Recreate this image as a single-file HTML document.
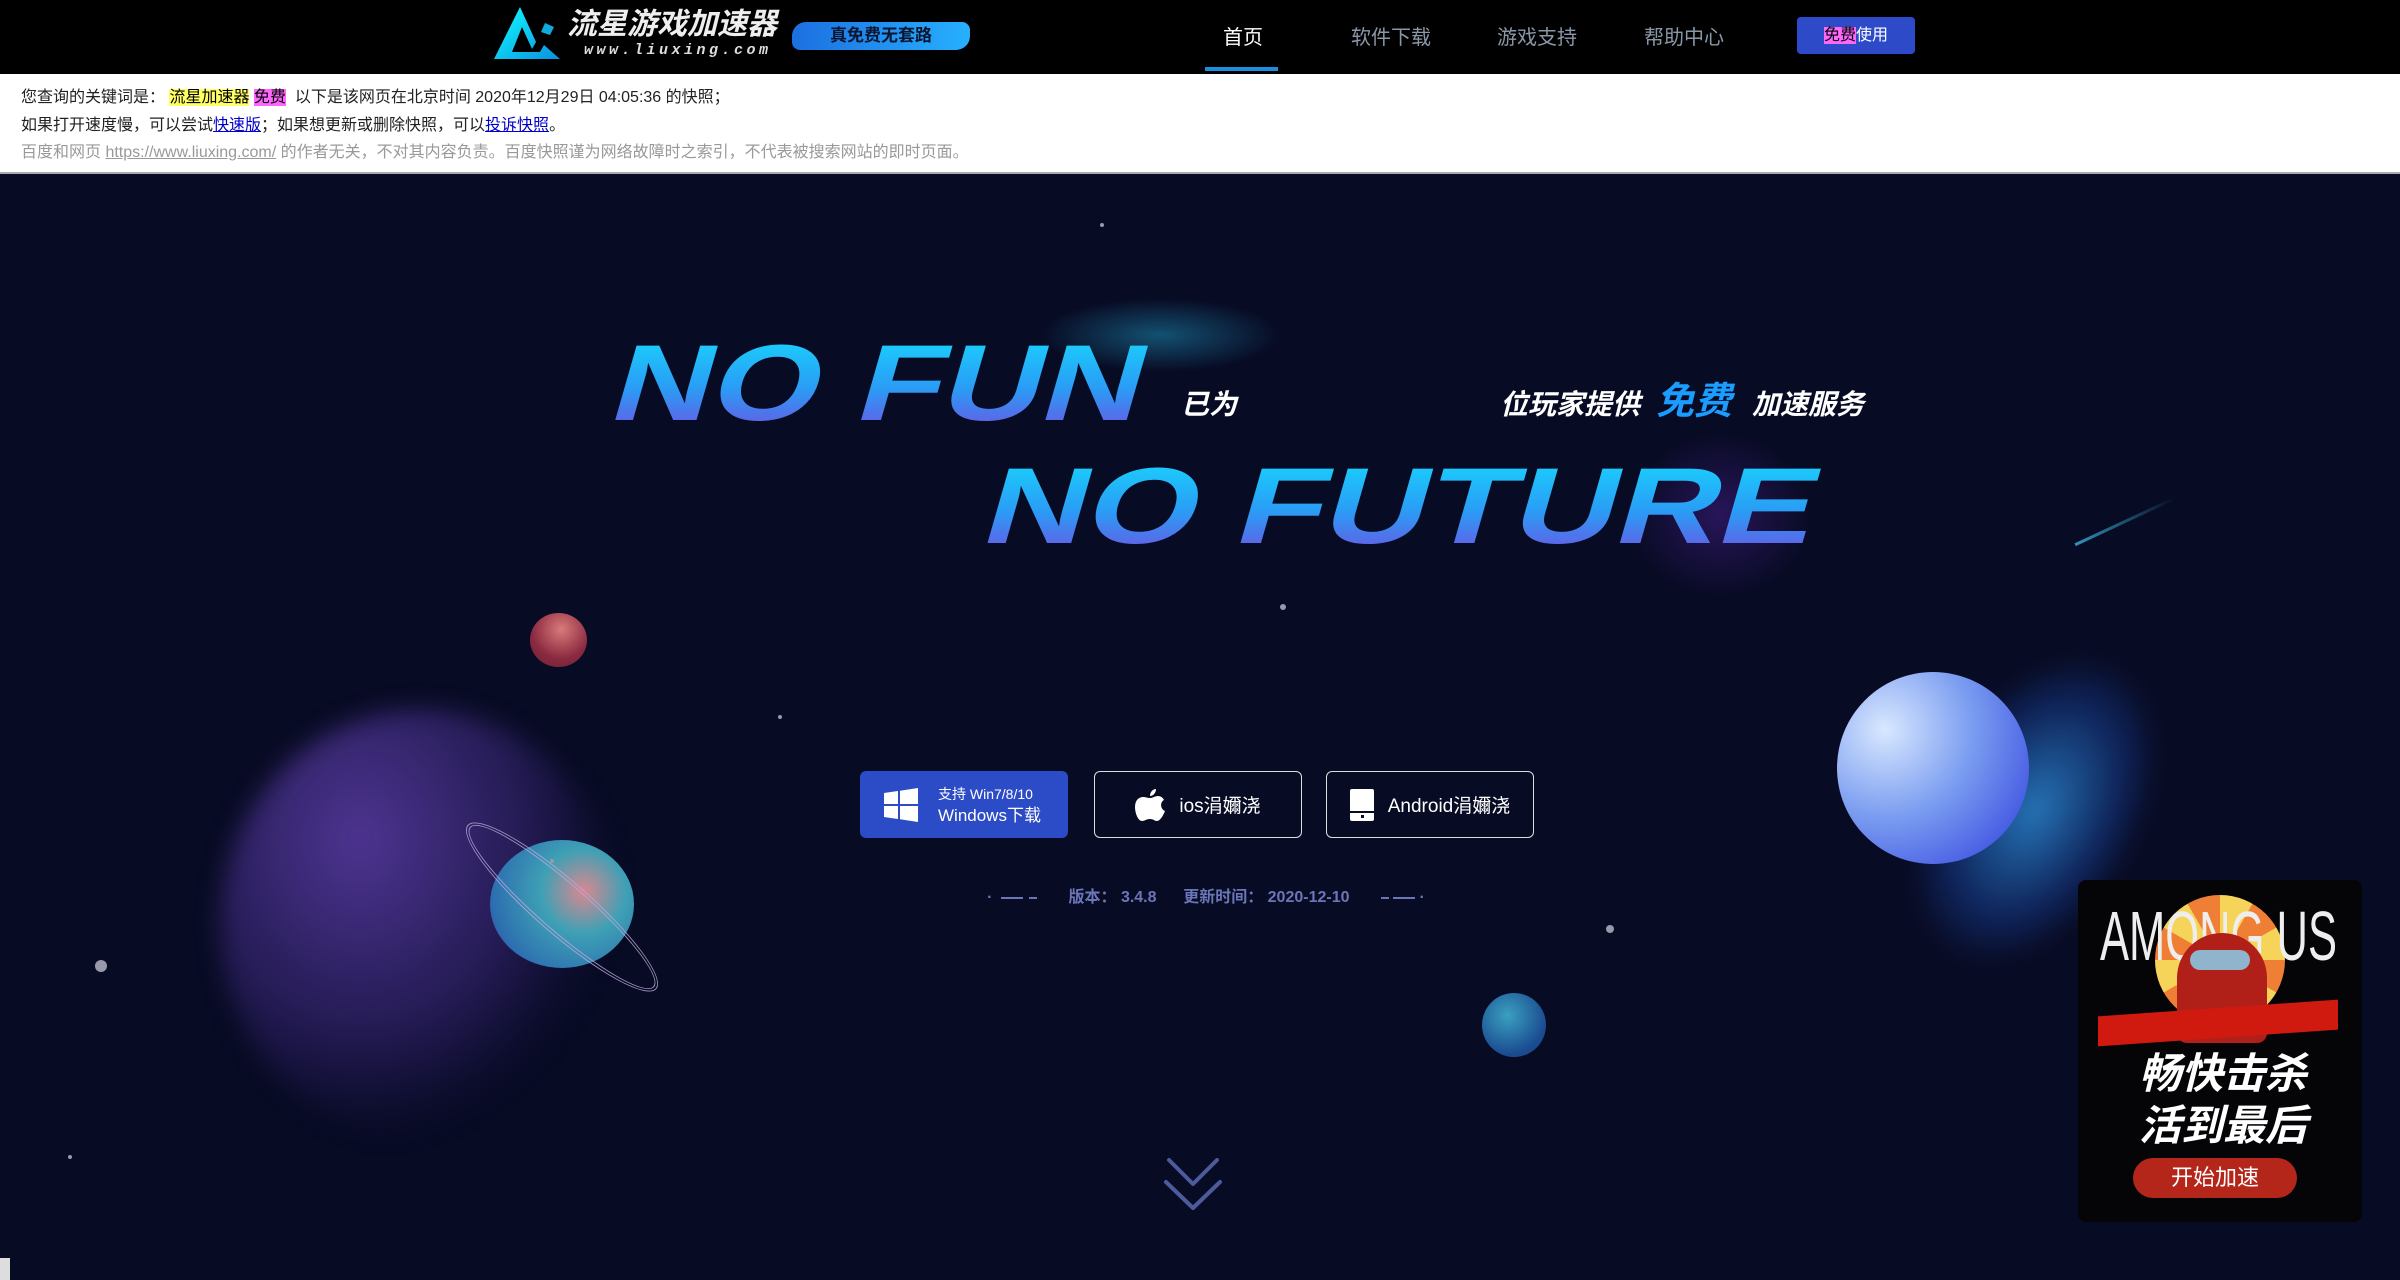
<!DOCTYPE html>
<html><head><meta charset="utf-8"><style>
*{margin:0;padding:0;box-sizing:border-box}
body{width:2400px;height:1280px;overflow:hidden;background:#080b24;font-family:"Liberation Sans","Noto Sans CJK SC",sans-serif;position:relative}
.abs{position:absolute}
#hdr{left:0;top:0;width:2400px;height:74px;background:#000}
.nav{top:21px;font-size:20px;color:#8a97a8;white-space:nowrap}
#snap{left:0;top:74px;width:2400px;height:100px;background:#fff;border-bottom:2px solid #aaa;font-size:16px;color:#222}
#snap div{position:absolute;left:21px;white-space:nowrap}
#hero{left:0;top:175px;width:2400px;height:1105px;background:#080b24;overflow:hidden}
.btn{height:67px;border-radius:6px;color:#fff;display:flex;align-items:center;justify-content:center;font-size:19px}
.star{position:absolute;border-radius:50%;background:#99a}
</style></head><body>
<div id="hdr" class="abs">
  <svg class="abs" style="left:490px;top:5px" width="75" height="56" viewBox="0 0 75 56"><defs><linearGradient id="tg" x1="0" y1="0" x2="1" y2="1"><stop offset="0" stop-color="#1ff"/><stop offset="1" stop-color="#0a8fe0"/></linearGradient></defs><path d="M30 2 L4 54 L70 54 L54 40 L50 47 L22 47 L32 22 L42 44 L46 37 Z" fill="url(#tg)"/><path d="M55 18 L64 22 L60 30 L51 27Z" fill="#1ad"/></svg>
  <div class="abs" style="left:567px;top:8px;font-size:30px;line-height:34px;font-weight:bold;font-style:italic;color:#eee;letter-spacing:0px;white-space:nowrap">流星游戏加速器</div>
  <div class="abs" style="left:584px;top:43px;font-size:15px;line-height:16px;font-weight:bold;font-style:italic;color:#ddd;letter-spacing:3.5px;font-family:'Liberation Mono',monospace;white-space:nowrap">www.liuxing.com</div>
  <div class="abs" style="left:792px;top:22px;width:178px;height:28px;border-radius:14px 8px 14px 8px;background:linear-gradient(90deg,#1c6fe0,#27b0ff);color:#0a1530;font-weight:bold;font-size:17px;text-align:center;line-height:28px">真免费无套路</div>
  <div class="abs nav" style="left:1223px;color:#fff">首页</div>
  <div class="abs" style="left:1205px;top:67px;width:73px;height:4px;background:#1a8fe0"></div>
  <div class="abs nav" style="left:1351px">软件下载</div>
  <div class="abs nav" style="left:1497px">游戏支持</div>
  <div class="abs nav" style="left:1644px">帮助中心</div>
  <div class="abs" style="left:1797px;top:17px;width:118px;height:37px;background:#2d4bc8;border-radius:4px;color:#fff;font-size:16px;text-align:center;line-height:37px"><span style="background:#f6f;color:#000">免费</span>使用</div>
</div>
<div id="snap" class="abs">
  <div style="top:9px">您查询的关键词是：&nbsp;<span style="background:#ff6;color:#000">流星加速器</span> <span style="background:#f6f;color:#000">免费</span>&nbsp; 以下是该网页在北京时间 2020年12月29日 04:05:36 的快照；</div>
  <div style="top:37px">如果打开速度慢，可以尝试<u style="color:#00c">快速版</u>；如果想更新或删除快照，可以<u style="color:#00c">投诉快照</u>。</div>
  <div style="top:64px;color:#999">百度和网页 <u>https://www.liuxing.com/</u> 的作者无关，不对其内容负责。百度快照谨为网络故障时之索引，不代表被搜索网站的即时页面。</div>
</div>
<div id="hero" class="abs">
  <div class="abs" style="left:220px;top:535px;width:400px;height:430px;border-radius:50%;filter:blur(12px);background:radial-gradient(ellipse at 35% 30%,rgba(90,60,165,.85),rgba(55,38,115,.6) 45%,rgba(25,20,70,.4) 62%,rgba(8,11,36,0) 71%)"></div>
  <div class="abs" style="left:1030px;top:120px;width:260px;height:80px;border-radius:50%;background:radial-gradient(ellipse,rgba(30,150,190,.5),rgba(8,11,36,0) 65%)"></div>
  <div class="abs" style="left:1620px;top:250px;width:200px;height:180px;border-radius:50%;background:radial-gradient(ellipse,rgba(100,40,190,.35),rgba(8,11,36,0) 65%)"></div>
  <div class="abs" style="left:1930px;top:470px;width:210px;height:330px;border-radius:50%;transform:rotate(30deg);filter:blur(8px);background:radial-gradient(ellipse,rgba(50,160,245,.7),rgba(30,90,210,.3) 50%,rgba(8,11,36,0) 72%)"></div>
  <div class="abs" style="left:1837px;top:497px;width:192px;height:192px;border-radius:50%;background:radial-gradient(circle at 25% 30%,#d8e8ff,#7a9cf0 45%,#3a4ce0 90%)"></div>
  <div class="abs" style="left:530px;top:438px;width:57px;height:54px;border-radius:50%;background:radial-gradient(circle at 55% 30%,#d97a7a,#8a2a40 60%,#6a2035)"></div>
  <div class="abs" style="left:490px;top:665px;width:144px;height:128px;border-radius:50%;background:radial-gradient(circle at 65% 40%,#d9888f,#3ea0b5 35%,#2d6fb0 75%,#2b3a9a)"></div>
  <div class="abs" style="left:437px;top:705px;width:250px;height:54px;border-radius:50%;border:4px double #b9a8d8;transform:rotate(41deg);opacity:.85"></div>
  <div class="abs" style="left:1482px;top:818px;width:64px;height:64px;border-radius:50%;background:radial-gradient(circle at 40% 35%,#3aa0c0,#1a4a90 70%)"></div>
  <div class="star" style="left:95px;top:785px;width:12px;height:12px"></div>
  <div class="star" style="left:1606px;top:750px;width:8px;height:8px"></div>
  <div class="star" style="left:1280px;top:429px;width:6px;height:6px"></div>
  <div class="star" style="left:550px;top:684px;width:4px;height:4px"></div>
  <div class="star" style="left:778px;top:540px;width:4px;height:4px"></div>
  <div class="star" style="left:1100px;top:48px;width:4px;height:4px"></div>
  <div class="star" style="left:68px;top:980px;width:4px;height:4px"></div>
  <div class="abs" style="left:2070px;top:345px;width:110px;height:3px;background:linear-gradient(90deg,rgba(60,180,220,.8),rgba(60,180,220,0));transform:rotate(-25deg)"></div>

  <svg class="abs" style="left:0;top:0" width="2400" height="500" viewBox="0 175 2400 500">
    <defs><linearGradient id="bg" x1="0" y1="0" x2="0" y2="1"><stop offset="0" stop-color="#15e0ff"/><stop offset=".55" stop-color="#2a9cf5"/><stop offset="1" stop-color="#7a45e0"/></linearGradient></defs>
    <g transform="translate(606,420) skewX(-16) scale(1,1.15)"><text x="0" y="0" font-family="Liberation Sans" font-weight="bold" font-size="94" fill="url(#bg)" textLength="530" lengthAdjust="spacingAndGlyphs">NO FUN</text></g>
    <g transform="translate(978,543) skewX(-16) scale(1,1.15)"><text x="0" y="0" font-family="Liberation Sans" font-weight="bold" font-size="94" fill="url(#bg)" textLength="830" lengthAdjust="spacingAndGlyphs">NO FUTURE</text></g>
    <text x="1181" y="414" font-family="Liberation Sans,Noto Sans CJK SC,sans-serif" font-weight="bold" font-size="28" fill="#fff" font-style="italic">已为</text>
    <text x="1500" y="414" font-family="Liberation Sans,Noto Sans CJK SC,sans-serif" font-weight="bold" font-size="28" fill="#fff" font-style="italic">位玩家提供</text>
    <text x="1656" y="414" font-family="Liberation Sans,Noto Sans CJK SC,sans-serif" font-weight="bold" font-size="38" fill="#1b9cff" font-style="italic">免费</text>
    <text x="1752" y="414" font-family="Liberation Sans,Noto Sans CJK SC,sans-serif" font-weight="bold" font-size="28" fill="#fff" font-style="italic">加速服务</text>
  </svg>

  <div class="abs btn" style="left:860px;top:596px;width:208px;background:#2c4bc6;font-size:15px;justify-content:flex-start;padding-left:24px">
    <svg width="34" height="34" viewBox="0 0 34 34" style="margin-right:20px"><path d="M0 5 L14 3 L14 16 L0 16Z M16 2.7 L34 0 L34 16 L16 16Z M0 18 L14 18 L14 31 L0 29Z M16 18 L34 18 L34 34 L16 31.3Z" fill="#fff"/></svg>
    <div style="line-height:22px"><div style="font-size:14px">支持 Win7/8/10</div><div style="font-size:17px">Windows下载</div></div></div>
  <div class="abs btn" style="left:1094px;top:596px;width:208px;border:1.5px solid #ddd">
    <svg width="30" height="34" viewBox="0 0 30 34" style="margin-right:14px"><path d="M21 1 C21 5 18 8 15 8 C15 4 18 1 21 1Z M15 10 C18 10 20 8 23 8 C26 8 28 10 29 12 C25 14 25 21 30 23 C28 28 25 33 22 33 C19 33 19 31 15 31 C11 31 10 33 7 33 C3 33 0 25 0 19 C0 12 4 9 8 9 C11 9 12 10 15 10Z" fill="#fff"/></svg>ios涓嬭浇</div>
  <div class="abs btn" style="left:1326px;top:596px;width:208px;border:1.5px solid #ddd">
    <svg width="24" height="32" viewBox="0 0 24 32" style="margin-right:14px"><rect x="0" y="0" width="24" height="32" rx="2" fill="#fff"/><rect x="0" y="22" width="24" height="2" fill="#080b24"/><rect x="11" y="26" width="3" height="3" fill="#080b24"/></svg>Android涓嬭浇</div>

  <div class="abs" style="left:966px;top:708px;width:480px;text-align:center;color:#6a76b8;font-size:16px;font-weight:bold;white-space:nowrap">
    <span style="letter-spacing:2px">· <span style="display:inline-block;width:22px;height:2px;background:#6a76b8;vertical-align:middle"></span> <span style="display:inline-block;width:8px;height:2px;background:#6a76b8;vertical-align:middle"></span></span>
    &nbsp;&nbsp;&nbsp;&nbsp;&nbsp;&nbsp;版本：&nbsp;3.4.8&nbsp;&nbsp;&nbsp;&nbsp;&nbsp;&nbsp;更新时间：&nbsp;2020-12-10&nbsp;&nbsp;&nbsp;&nbsp;&nbsp;&nbsp;
    <span><span style="display:inline-block;width:8px;height:2px;background:#6a76b8;vertical-align:middle"></span> <span style="display:inline-block;width:22px;height:2px;background:#6a76b8;vertical-align:middle"></span> ·</span></div>

  <svg class="abs" style="left:1160px;top:980px" width="70" height="60" viewBox="1160 1155 70 60"><path d="M1169 1160 L1193 1184 L1217 1160 M1166 1182 L1193 1208 L1220 1182" stroke="#4d5b9c" stroke-width="4" fill="none" stroke-linecap="round" stroke-linejoin="round"/></svg>

  <div class="abs" style="left:2078px;top:705px;width:284px;height:342px;border-radius:8px;background:#050508;overflow:hidden">
    <div class="abs" style="left:77px;top:15px;width:130px;height:130px;border-radius:50%;background:conic-gradient(#f6d45a 0 30deg,#ef7f35 30deg 60deg,#f6d45a 60deg 90deg,#ef7f35 90deg 120deg,#f6d45a 120deg 150deg,#ef7f35 150deg 180deg,#f6d45a 180deg 210deg,#ef7f35 210deg 240deg,#f6d45a 240deg 270deg,#ef7f35 270deg 300deg,#f6d45a 300deg 330deg,#ef7f35 330deg)"></div>
    <svg class="abs" style="left:0;top:0" width="284" height="100"><text x="22" y="80" font-family="Liberation Sans Narrow,Liberation Sans,sans-serif" font-size="70" fill="#eee" textLength="237" lengthAdjust="spacingAndGlyphs">AMONG US</text></svg>
    <div class="abs" style="left:99px;top:53px;width:90px;height:110px;border-radius:45px 45px 10px 10px;background:#b02018"></div>
    <div class="abs" style="left:112px;top:70px;width:60px;height:20px;border-radius:10px;background:#8fb4cc"></div>
    <div class="abs" style="left:20px;top:128px;width:240px;height:30px;background:#d01a10;transform:skewY(-4deg)"></div>
    <div class="abs" style="left:40px;top:168px;width:210px;text-align:center;color:#fff;font-size:42px;font-weight:bold;font-style:italic;line-height:52px">畅快击杀<br>活到最后</div>
    <div class="abs" style="left:55px;top:278px;width:164px;height:40px;border-radius:20px;background:#b5261a;color:#fff;font-size:22px;text-align:center;line-height:40px">开始加速</div>
  </div>
</div>
<div class="abs" style="left:0;top:1258px;width:10px;height:22px;background:#ddd"></div>
</body></html>
